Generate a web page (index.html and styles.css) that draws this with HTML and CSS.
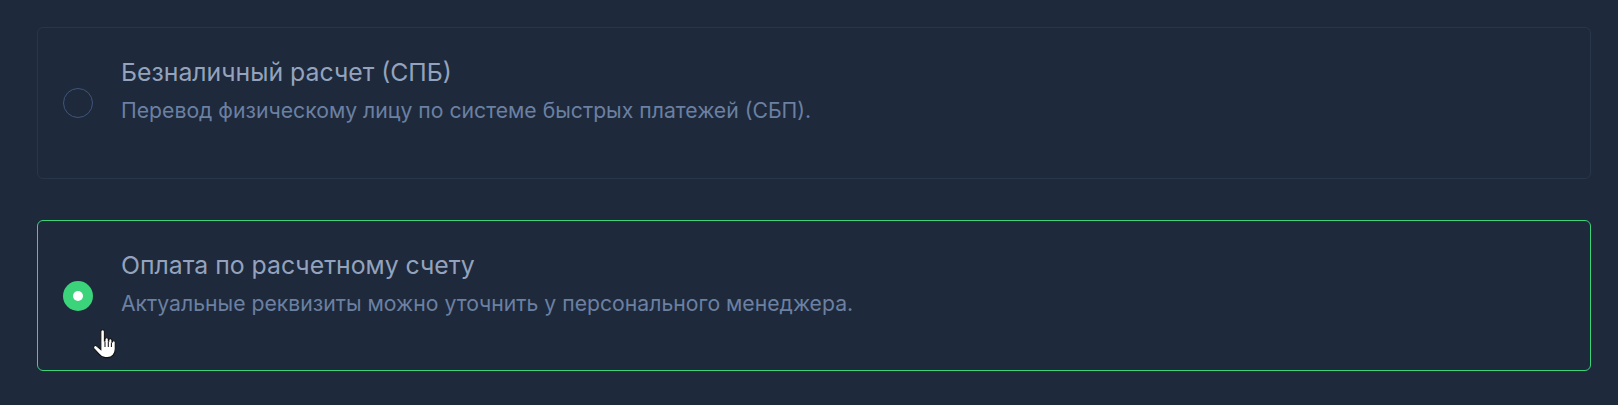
FILE: index.html
```html
<!DOCTYPE html>
<html lang="ru">
<head>
<meta charset="utf-8">
<link rel="stylesheet" href="styles.css">
</head>
<body>
<div class="list">
  <label class="option">
    <span class="radio"></span>
    <span class="text">
      <span class="title">Безналичный расчет (СПБ)</span>
      <span class="desc">Перевод физическому лицу по системе быстрых платежей (СБП).</span>
    </span>
  </label>
  <label class="option selected">
    <span class="radio"><span class="dot"></span></span>
    <span class="text">
      <span class="title">Оплата по расчетному счету</span>
      <span class="desc">Актуальные реквизиты можно уточнить у персонального менеджера.</span>
    </span>
    <svg class="cursor" width="26" height="31" viewBox="0 0 24 30">
      <path d="M8 2.5c0-1.1.8-1.8 1.7-1.8s1.7.7 1.7 1.8v9.2l.6-.1v-1.6c0-1 .8-1.6 1.6-1.6s1.6.6 1.6 1.6v1.8l.5.1v-1.1c0-.9.7-1.5 1.5-1.5s1.5.6 1.5 1.5v1.7l.4.1c.1-.8.7-1.3 1.4-1.3.8 0 1.4.6 1.4 1.5v6.6c0 4.6-3 8.3-7.6 8.3h-2c-2.6 0-4.3-1-5.8-3.1L1.3 19c-.6-.9-.4-2 .4-2.6.8-.6 1.9-.4 2.6.4L8 20V2.5z" fill="#fff" stroke="#111" stroke-width="1"/>
      <path d="M12 12.5v5M15.2 12.5v5M18.2 13v4.5" stroke="#111" stroke-width="1" fill="none"/>
    </svg>
  </label>
</div>
</body>
</html>
```
FILE: styles.css
```css
html, body {
  margin: 0;
  padding: 0;
  background: #1e293b;
}
body {
  font-family: Inter, "Noto Sans", "Liberation Sans", sans-serif;
}
.list {
  display: flex;
  flex-direction: column;
  gap: 41px;
  padding: 27px 27px 0 37px;
}
.option {
  position: relative;
  display: flex;
  align-items: center;
  gap: 28px;
  height: 152px;
  box-sizing: border-box;
  padding: 0 0 0 25px;
  border: 1px solid #29364a;
  border-radius: 6px;
}
.option.selected {
  height: 151px;
  border-color: #3bd47a;
}
.radio {
  flex: none;
  width: 30px;
  height: 30px;
  box-sizing: border-box;
  border: 1px solid #3f5679;
  border-radius: 50%;
  display: flex;
  align-items: center;
  justify-content: center;
}
.selected .radio {
  border: none;
  background: #3bd47a;
}
.dot {
  width: 10px;
  height: 10px;
  border-radius: 50%;
  background: #fff;
}
.text {
  display: flex;
  flex-direction: column;
  gap: 8px;
  margin-bottom: 26px;
}
.title {
  font-size: 24.8px;
  line-height: 32px;
  color: #94a3bd;
}
.desc {
  font-size: 21.2px;
  line-height: 28px;
  color: #6b80a2;
}
.cursor {
  position: absolute;
  left: 54px;
  top: 108px;
}
```
